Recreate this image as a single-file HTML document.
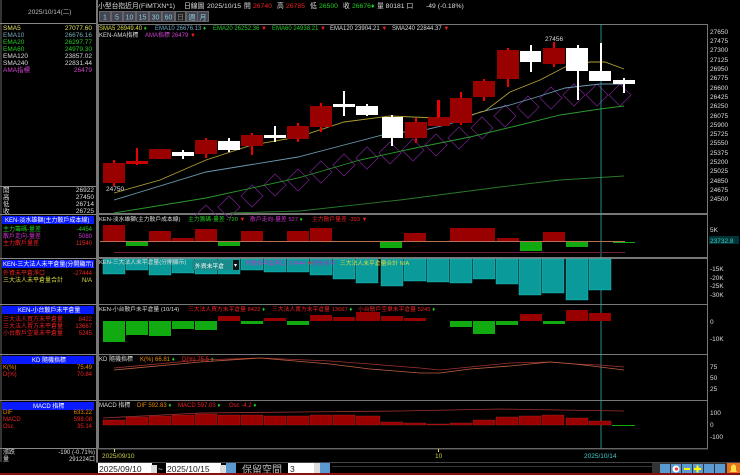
<!DOCTYPE html>
<html><head><meta charset="utf-8"><style>
body{margin:0;background:#000;width:740px;height:475px;overflow:hidden}
svg{display:block}
text{font-family:"Liberation Sans","Noto Sans CJK TC",sans-serif}
.m{font-family:"Liberation Mono","Noto Sans CJK TC",monospace}
</style></head><body>
<svg width="740" height="475" viewBox="0 0 740 475" xmlns="http://www.w3.org/2000/svg">
<rect width="740" height="475" fill="#000"/>
<rect x="96" y="0" width="2" height="462" fill="#777"/>
<rect x="0" y="0" width="2" height="475" fill="#333"/>
<line x1="0" y1="23.5" x2="96" y2="23.5" stroke="#888"/>
<line x1="0" y1="186.5" x2="96" y2="186.5" stroke="#888"/>
<line x1="0" y1="214.5" x2="96" y2="214.5" stroke="#888"/>
<line x1="0" y1="258.5" x2="96" y2="258.5" stroke="#888"/>
<line x1="0" y1="304.5" x2="96" y2="304.5" stroke="#888"/>
<line x1="0" y1="354.5" x2="96" y2="354.5" stroke="#888"/>
<line x1="0" y1="400.5" x2="96" y2="400.5" stroke="#888"/>
<line x1="0" y1="448.5" x2="96" y2="448.5" stroke="#888"/>
<g class="m" font-size="6.5">
<text x="28" y="14" fill="#bbb">2025/10/14(二)</text>
<text x="3" y="30" fill="#e0e060">SMA5</text><text x="92" y="30" fill="#e0e060" text-anchor="end">27077.60</text>
<text x="3" y="37" fill="#7ab">EMA10</text><text x="92" y="37" fill="#7ab" text-anchor="end">26676.16</text>
<text x="3" y="44" fill="#2c2">EMA20</text><text x="92" y="44" fill="#2c2" text-anchor="end">26297.77</text>
<text x="3" y="51" fill="#2c2">EMA60</text><text x="92" y="51" fill="#2c2" text-anchor="end">24979.30</text>
<text x="3" y="58" fill="#ddd">EMA120</text><text x="92" y="58" fill="#ddd" text-anchor="end">23857.02</text>
<text x="3" y="65" fill="#ddd">SMA240</text><text x="92" y="65" fill="#ddd" text-anchor="end">22831.44</text>
<text x="3" y="72" fill="#c4c">AMA指標</text><text x="92" y="72" fill="#c4c" text-anchor="end">26479</text>
<text x="3" y="192" fill="#ddd">開</text><text x="94" y="192" fill="#ddd" text-anchor="end">26922</text>
<text x="3" y="199" fill="#ddd">高</text><text x="94" y="199" fill="#ddd" text-anchor="end">27450</text>
<text x="3" y="206" fill="#ddd">低</text><text x="94" y="206" fill="#ddd" text-anchor="end">26714</text>
<text x="3" y="213" fill="#ddd">收</text><text x="94" y="213" fill="#ddd" text-anchor="end">26725</text>
</g>
<rect x="2" y="216" width="92" height="8" fill="#0a1aff"/>
<rect x="2" y="260" width="92" height="8" fill="#0a1aff"/>
<rect x="2" y="306" width="92" height="8" fill="#0a1aff"/>
<rect x="2" y="356" width="92" height="8" fill="#0a1aff"/>
<rect x="2" y="402" width="92" height="8" fill="#0a1aff"/>
<g class="m" font-size="6">
<text x="5" y="222" fill="#fff">KEN-淡水雄獅(主力散戶成本線)</text>
<text x="3" y="231" fill="#2c2">主力籌碼-量差</text><text x="92" y="231" fill="#2c2" text-anchor="end">-4454</text>
<text x="3" y="238" fill="#c3c">散戶走向-量差</text><text x="92" y="238" fill="#c3c" text-anchor="end">5080</text>
<text x="3" y="245" fill="#e22">主力散戶量差</text><text x="92" y="245" fill="#e22" text-anchor="end">11540</text>
<text x="3" y="266" fill="#fff">KEN-三大法人未平倉量(分開顯示)</text>
<text x="3" y="275" fill="#e22">外資未平倉淨口</text><text x="92" y="275" fill="#e22" text-anchor="end">-27444</text>
<text x="3" y="282" fill="#dd4">三大法人未平倉量合計</text><text x="92" y="282" fill="#dd4" text-anchor="end">N/A</text>
<text x="18" y="312" fill="#fff">KEN-小台散戶未平倉量</text>
<text x="3" y="321" fill="#e22">三大法人買方未平倉量</text><text x="92" y="321" fill="#e22" text-anchor="end">8422</text>
<text x="3" y="328" fill="#e22">三大法人賣方未平倉量</text><text x="92" y="328" fill="#e22" text-anchor="end">13667</text>
<text x="3" y="335" fill="#e22">小台散戶空單未平倉量</text><text x="92" y="335" fill="#e22" text-anchor="end">5245</text>
<text x="32" y="362" fill="#fff">KD 隨機指標</text>
<text x="3" y="369" fill="#e80">K(%)</text><text x="92" y="369" fill="#e80" text-anchor="end">75.49</text>
<text x="3" y="376" fill="#e22">D(%)</text><text x="92" y="376" fill="#e22" text-anchor="end">70.84</text>
<text x="33" y="408" fill="#fff">MACD 指標</text>
<text x="3" y="414" fill="#e80">DIF</text><text x="92" y="414" fill="#e80" text-anchor="end">633.22</text>
<text x="3" y="421" fill="#e22">MACD</text><text x="92" y="421" fill="#e22" text-anchor="end">598.08</text>
<text x="3" y="428" fill="#e22">Osc</text><text x="92" y="428" fill="#e22" text-anchor="end">35.14</text>
<text x="3" y="454" fill="#ddd">漲跌</text><text x="95" y="454" fill="#ddd" text-anchor="end">-190 (-0.71%)</text>
<text x="3" y="461" fill="#ddd">量</text><text x="95" y="461" fill="#ddd" text-anchor="end">291224口</text>
</g>

<g font-size="6.8">
<text x="98" y="8" fill="#ddd">小型台指近月(FIMTXN*1)</text>
<text x="184" y="8" fill="#ddd">日線圖</text>
<text x="207" y="8" fill="#ddd">2025/10/15</text>
<text x="244" y="8" fill="#ddd">開</text><text x="253" y="8" fill="#e22">26740</text>
<text x="277" y="8" fill="#ddd">高</text><text x="286" y="8" fill="#e22">26785</text>
<text x="310" y="8" fill="#ddd">低</text><text x="319" y="8" fill="#2c2">26500</text>
<text x="343" y="8" fill="#ddd">收</text><text x="352" y="8" fill="#2c2">26676</text>
<text x="371" y="8" fill="#2c2">♦</text>
<text x="377" y="8" fill="#ddd">量 80181 口</text>
<text x="426" y="8" fill="#ddd">-49 (-0.18%)</text>
</g>
<g font-size="7" text-anchor="middle">
<rect x="99" y="11" width="110" height="11" fill="#3a3a3a"/>
<rect x="99.5" y="11.5" width="11" height="10" fill="#445" stroke="#666"/><text x="105" y="19.5" fill="#8cc">1</text>
<rect x="111.5" y="11.5" width="11" height="10" fill="#445" stroke="#666"/><text x="117" y="19.5" fill="#8cc">5</text>
<rect x="123.5" y="11.5" width="12" height="10" fill="#445" stroke="#666"/><text x="129.5" y="19.5" fill="#8cc">10</text>
<rect x="136.5" y="11.5" width="12" height="10" fill="#445" stroke="#666"/><text x="142.5" y="19.5" fill="#8cc">15</text>
<rect x="149.5" y="11.5" width="12" height="10" fill="#445" stroke="#666"/><text x="155.5" y="19.5" fill="#8cc">30</text>
<rect x="162.5" y="11.5" width="12" height="10" fill="#445" stroke="#666"/><text x="168.5" y="19.5" fill="#8cc">60</text>
<rect x="175.5" y="11.5" width="10" height="10" fill="#222" stroke="#666"/><text x="180.5" y="19.5" fill="#888">日</text>
<rect x="186.5" y="11.5" width="11" height="10" fill="#445" stroke="#666"/><text x="192" y="19.5" fill="#8cc">週</text>
<rect x="197.5" y="11.5" width="11" height="10" fill="#445" stroke="#666"/><text x="203" y="19.5" fill="#8cc">月</text>
</g>

<g fill="none" stroke="#777">
<rect x="98.5" y="24.5" width="609" height="189"/>
<rect x="98.5" y="214.5" width="609" height="43"/>
<rect x="98.5" y="258.5" width="609" height="46"/>
<rect x="98.5" y="304.5" width="609" height="50"/>
<rect x="98.5" y="354.5" width="609" height="46"/>
<rect x="98.5" y="400.5" width="609" height="48"/>
</g>
<line x1="98" y1="449" x2="708" y2="449" stroke="#555"/>

<g font-size="6">
<text x="99" y="30" fill="#dd4">SMA5 26949.40 <tspan fill="#2c2">♦</tspan></text>
<text x="155" y="30" fill="#6ac">EMA10 26676.13 <tspan fill="#2c2">♦</tspan></text>
<text x="213" y="30" fill="#2c2">EMA20 26252.36 <tspan fill="#e22">▼</tspan></text>
<text x="272" y="30" fill="#2c2">EMA60 24938.21 <tspan fill="#e22">▼</tspan></text>
<text x="330" y="30" fill="#ddd">EMA120 23904.21 <tspan fill="#e22">▼</tspan></text>
<text x="392" y="30" fill="#ddd">SMA240 22844.37 <tspan fill="#e22">▼</tspan></text>
<text x="99" y="37" fill="#ddd">KEN-AMA指標</text>
<text x="145" y="37" fill="#c4c">AMA指標 26479 <tspan fill="#e22">▼</tspan></text>
</g>

<g font-size="6.5" fill="#ddd">
<text x="710" y="34">27650</text><text x="710" y="43">27475</text><text x="710" y="52">27300</text><text x="710" y="62">27125</text>
<text x="710" y="71">26950</text><text x="710" y="80">26775</text><text x="710" y="90">26600</text><text x="710" y="99">26425</text>
<text x="710" y="108">26250</text><text x="710" y="118">26075</text><text x="710" y="127">25900</text><text x="710" y="136">25725</text>
<text x="710" y="145">25550</text><text x="710" y="155">25375</text><text x="710" y="164">25200</text><text x="710" y="173">25025</text>
<text x="710" y="183">24850</text><text x="710" y="192">24675</text><text x="710" y="201">24500</text>
<text x="710" y="232">5K</text>
<rect x="709" y="236" width="30" height="8" fill="#033"/><text x="710" y="243" fill="#4cc">23732.8</text>
<text x="710" y="271">-15K</text><text x="710" y="280">-20K</text><text x="710" y="288">-25K</text><text x="710" y="297">-30K</text>
<text x="710" y="324">0</text><text x="710" y="341">-10K</text>
<text x="710" y="369">75</text><text x="710" y="380">50</text><text x="710" y="391">25</text>
<text x="710" y="415">100</text><text x="710" y="427">0</text><text x="710" y="439">-100</text>
</g>

<g fill="none" stroke="#6a2080" stroke-width="0.8">
<path d="M195 216l11-11 11 11M218 207l11-11 11 11 -11 11z M241 196l11-11 11 11-11 11z M264 185l11-11 11 11-11 11z M287 180l11-11 11 11-11 11z M310 172l11-11 11 11-11 11z M333 165l11-11 11 11-11 11z M356 158l11-11 11 11-11 11z M379 153l11-11 11 11-11 11z M402 150l11-11 11 11-11 11z M425 145l11-11 11 11-11 11z M448 138l11-11 11 11-11 11z M471 128l11-11 11 11-11 11z M494 116l11-11 11 11-11 11z M517 107l11-11 11 11-11 11z M540 98l11-11 11 11-11 11z M563 95l11-11 11 11-11 11z M586 95l11-11 11 11-11 11z M609 95l11-11 11 11-11 11z"/>
</g>
<g fill="none" stroke-width="0.9">
<polyline stroke="#2a7a2a" points="230,213 300,211 400,200 500,187 560,180 624,176"/>
<polyline stroke="#2a9a2a" points="114,213 206,198 298,178 360,160 420,147 470,137 520,125 560,115 600,109 624,106"/>
<polyline stroke="#6a9ab0" points="114,200 206,172 298,157 344,145 390,133 420,131 450,124 480,112 510,105 540,96 565,88 600,84 624,84"/>
<polyline stroke="#b0a030" points="114,193 160,180 206,160 252,145 298,137 344,122 390,116 436,118 460,118 485,111 510,92 540,80 565,67 590,62 605,62 624,69"/>
</g>
<line x1="601" y1="24" x2="601" y2="448" stroke="#3aa" stroke-width="0.8"/>

<g>
<rect x="113" y="160" width="2" height="26" fill="#e00"/><rect x="103" y="163" width="22" height="20" fill="#900"/>
<rect x="136" y="148" width="2" height="17" fill="#e00"/><rect x="126" y="161" width="22" height="3" fill="#c00"/>
<rect x="149" y="149" width="22" height="10" fill="#900"/>
<rect x="182" y="150" width="2" height="9" fill="#fff"/><rect x="172" y="152" width="22" height="4" fill="#fff"/>
<rect x="205" y="138" width="2" height="20" fill="#e00"/><rect x="195" y="140" width="22" height="14" fill="#900"/>
<rect x="228" y="138" width="2" height="14" fill="#fff"/><rect x="218" y="141" width="22" height="9" fill="#fff"/>
<rect x="251" y="133" width="2" height="22" fill="#e00"/><rect x="241" y="135" width="22" height="11" fill="#900"/>
<rect x="274" y="126" width="2" height="16" fill="#fff"/><rect x="264" y="135" width="22" height="3" fill="#fff"/>
<rect x="297" y="123" width="2" height="19" fill="#e00"/><rect x="287" y="126" width="22" height="13" fill="#900"/>
<rect x="320" y="103" width="2" height="29" fill="#e00"/><rect x="310" y="106" width="22" height="21" fill="#900"/>
<rect x="343" y="91" width="2" height="25" fill="#fff"/><rect x="333" y="104" width="22" height="3" fill="#fff"/>
<rect x="366" y="104" width="2" height="12" fill="#fff"/><rect x="356" y="106" width="22" height="9" fill="#fff"/>
<rect x="391" y="115" width="2" height="31" fill="#fff"/><rect x="382" y="117" width="21" height="21" fill="#fff"/>
<rect x="415" y="118" width="2" height="25" fill="#e00"/><rect x="405" y="122" width="22" height="16" fill="#900"/>
<rect x="437" y="100" width="3" height="25" fill="#e00"/><rect x="428" y="117" width="22" height="9" fill="#900"/>
<rect x="460" y="92" width="2" height="33" fill="#e00"/><rect x="450" y="98" width="22" height="25" fill="#900"/>
<rect x="483" y="79" width="2" height="22" fill="#e00"/><rect x="473" y="81" width="22" height="16" fill="#900"/>
<rect x="507" y="48" width="2" height="39" fill="#e00"/><rect x="497" y="50" width="22" height="29" fill="#900"/>
<rect x="530" y="45" width="2" height="27" fill="#fff"/><rect x="520" y="51" width="21" height="11" fill="#fff"/>
<rect x="553" y="42" width="2" height="25" fill="#e00"/><rect x="543" y="48" width="22" height="16" fill="#900"/>
<rect x="577" y="45" width="2" height="55" fill="#fff"/><rect x="566" y="48" width="22" height="23" fill="#fff"/>
<rect x="600" y="43" width="2" height="38" fill="#fff"/><rect x="589" y="71" width="22" height="10" fill="#fff"/>
<rect x="623" y="78" width="2" height="15" fill="#fff"/><rect x="613" y="80" width="22" height="4" fill="#fff"/>
</g>
<text x="106" y="191" font-size="6.5" fill="#ddd">24750</text>
<text x="545" y="41" font-size="6.5" fill="#ddd">27456</text>

<g font-size="5.8">
<text x="99" y="221" fill="#ddd">KEN-淡水雄獅(主力散戶成本線)</text>
<text x="188" y="221" fill="#2c2">主力籌碼-量差 -720 <tspan fill="#e22">▼</tspan></text>
<text x="250" y="221" fill="#c3c">散戶走向-量差 527 <tspan fill="#2c2">♦</tspan></text>
<text x="312" y="221" fill="#e22">主力散戶量差 -393 <tspan fill="#e22">▼</tspan></text>
</g>
<g fill="#900">
<rect x="103" y="225" width="22" height="17"/><rect x="149" y="231" width="22" height="11"/><rect x="172" y="238" width="22" height="4"/>
<rect x="195" y="229" width="22" height="13"/><rect x="241" y="231" width="22" height="11"/><rect x="287" y="231" width="22" height="11"/>
<rect x="310" y="228" width="22" height="14"/><rect x="404" y="233" width="22" height="9"/><rect x="450" y="228" width="45" height="14"/>
<rect x="543" y="232" width="22" height="10"/><rect x="497" y="238" width="22" height="4"/>
</g>
<line x1="100" y1="241.5" x2="625" y2="241.5" stroke="#b87050"/>
<g fill="#1a1">
<rect x="126" y="242" width="22" height="4"/><rect x="218" y="242" width="22" height="4"/><rect x="380" y="242" width="22" height="6"/>
<rect x="520" y="242" width="22" height="9"/><rect x="566" y="242" width="22" height="5"/><rect x="613" y="242" width="22" height="1"/>
</g>
<line x1="114" y1="252.5" x2="625" y2="252.5" stroke="#702040"/>

<g fill="#0a9a9a" stroke="#2cc" stroke-width="0.4">
<rect x="103" y="259" width="22" height="15"/><rect x="126" y="259" width="22" height="11"/><rect x="149" y="259" width="22" height="16"/>
<rect x="172" y="259" width="22" height="14"/><rect x="195" y="259" width="22" height="15"/><rect x="218" y="259" width="22" height="15"/>
<rect x="241" y="259" width="22" height="11"/><rect x="264" y="259" width="22" height="13"/><rect x="287" y="259" width="22" height="13"/>
<rect x="310" y="259" width="22" height="16"/><rect x="333" y="259" width="22" height="20"/><rect x="356" y="259" width="22" height="24"/>
<rect x="381" y="259" width="22" height="27"/><rect x="404" y="259" width="22" height="22"/><rect x="427" y="259" width="22" height="23"/>
<rect x="450" y="259" width="22" height="24"/><rect x="473" y="259" width="22" height="20"/><rect x="496" y="259" width="22" height="25"/>
<rect x="519" y="259" width="22" height="36"/><rect x="542" y="259" width="22" height="34"/><rect x="566" y="259" width="22" height="41"/>
<rect x="589" y="259" width="22" height="31"/>
</g>
<g font-size="5.8">
<text x="99" y="264" fill="#ddd">KEN-三大法人未平倉量(分開顯示)</text>
<rect x="192" y="260" width="40" height="10" fill="#1a8a8a"/><text x="195" y="268" fill="#fff">外資未平倉</text>
<rect x="233" y="260" width="6" height="10" fill="#111"/><text x="234" y="267" fill="#fff">▾</text>
<text x="245" y="265" fill="#c3c">外資未平倉淨口 -27444 <tspan fill="#e22">▼</tspan></text>
<text x="312" y="265" fill="#aa30c0">投信未平</text>
<text x="340" y="265" fill="#dd4">三大法人未平倉量合計 N/A</text>
</g>

<g font-size="5.8">
<text x="99" y="311" fill="#ddd">KEN-小台散戶未平倉量 (10/14)</text>
<text x="188" y="311" fill="#e22">三大法人買方未平倉量 8422 <tspan fill="#2c2">♦</tspan></text>
<text x="272" y="311" fill="#e22">三大法人賣方未平倉量 13667 <tspan fill="#2c2">♦</tspan></text>
<text x="358" y="311" fill="#e22">小台散戶空單未平倉量 5245 <tspan fill="#2c2">♦</tspan></text>
</g>
<g fill="#1a1">
<rect x="103" y="321" width="22" height="21"/><rect x="126" y="321" width="22" height="14"/><rect x="149" y="321" width="22" height="15"/>
<rect x="172" y="321" width="22" height="8"/><rect x="195" y="321" width="22" height="9"/><rect x="241" y="321" width="22" height="3"/>
<rect x="287" y="321" width="22" height="4"/><rect x="450" y="321" width="22" height="6"/><rect x="473" y="321" width="22" height="13"/>
<rect x="496" y="321" width="22" height="4"/><rect x="543" y="321" width="22" height="3"/>
</g>
<g fill="#900">
<rect x="218" y="316" width="22" height="5"/><rect x="264" y="318" width="22" height="3"/><rect x="310" y="315" width="22" height="6"/>
<rect x="333" y="317" width="22" height="4"/><rect x="356" y="312" width="24" height="9"/><rect x="381" y="316" width="22" height="5"/>
<rect x="404" y="318" width="22" height="3"/><rect x="520" y="314" width="22" height="7"/><rect x="566" y="310" width="22" height="11"/><rect x="589" y="313" width="22" height="8"/>
</g>

<g font-size="6">
<text x="99" y="361" fill="#ddd">KD 隨機指標</text>
<text x="140" y="361" fill="#e80">K(%) 66.81 <tspan fill="#2c2">♦</tspan></text>
<text x="182" y="361" fill="#e22">D(%) 75.5 <tspan fill="#2c2">♦</tspan></text>
</g>
<g fill="none" stroke-width="0.8">
<polyline stroke="#a03030" points="114,368 200,360 260,358 330,361 370,364 420,368 440,370 470,367 510,363 550,362 575,364 600,365 624,367"/>
<polyline stroke="#c06040" points="114,370 200,362 260,358 330,364 370,369 420,373 440,373 470,369 510,366 550,362 575,364 600,367 624,370"/>
</g>

<g font-size="6">
<text x="99" y="407" fill="#ddd">MACD 指標</text>
<text x="137" y="407" fill="#e80">DIF 592.83 <tspan fill="#2c2">♦</tspan></text>
<text x="178" y="407" fill="#e22">MACD 597.03 <tspan fill="#2c2">♦</tspan></text>
<text x="229" y="407" fill="#e22">Osc -4.2 <tspan fill="#2c2">♦</tspan></text>
</g>
<g fill="#900" stroke="#c33" stroke-width="0.3">
<rect x="103" y="420" width="22" height="5"/><rect x="126" y="417" width="22" height="8"/><rect x="149" y="416" width="22" height="9"/>
<rect x="172" y="415" width="22" height="10"/><rect x="195" y="414" width="22" height="11"/><rect x="218" y="415" width="22" height="10"/>
<rect x="241" y="415" width="22" height="10"/><rect x="264" y="416" width="22" height="9"/><rect x="287" y="416" width="22" height="9"/>
<rect x="310" y="415" width="22" height="10"/><rect x="333" y="415" width="22" height="10"/><rect x="356" y="416" width="24" height="9"/>
<rect x="381" y="422" width="22" height="3"/><rect x="404" y="423" width="22" height="2"/><rect x="427" y="424" width="22" height="1"/>
<rect x="450" y="423" width="22" height="2"/><rect x="473" y="420" width="22" height="5"/><rect x="496" y="417" width="22" height="8"/>
<rect x="519" y="416" width="22" height="9"/><rect x="542" y="415" width="22" height="10"/><rect x="566" y="418" width="22" height="7"/><rect x="589" y="421" width="22" height="4"/>
</g>
<line x1="612" y1="425.5" x2="635" y2="425.5" stroke="#1a1"/>
<polyline fill="none" stroke="#a03030" stroke-width="0.8" points="103,418 200,413 300,412 400,411 500,409 560,410 624,411"/>

<line x1="114.5" y1="449" x2="114.5" y2="452" stroke="#dd4"/>
<text x="102" y="458" font-size="6.5" fill="#cc4">2025/09/10</text>
<line x1="438.5" y1="449" x2="438.5" y2="452" stroke="#dd4"/>
<text x="435" y="458" font-size="6.5" fill="#cc4">10</text>
<text x="584" y="458" font-size="6.5" fill="#4cc">2025/10/14</text>

<rect x="0" y="462" width="740" height="13" fill="#000"/>
<rect x="96" y="462" width="644" height="1" fill="#444"/>
<rect x="98" y="463" width="54" height="11" fill="#fff"/><text x="99" y="472" font-size="8.5" fill="#222">2025/09/10</text>
<rect x="151" y="465" width="6" height="8" fill="#ddd"/>
<text x="158" y="472" font-size="8" fill="#ddd">~</text>
<rect x="166" y="463" width="55" height="11" fill="#fff"/><text x="167" y="472" font-size="8.5" fill="#222">2025/10/15</text>
<rect x="220" y="465" width="6" height="8" fill="#ddd"/>
<rect x="226" y="463" width="10" height="11" fill="#5a9ad0"/>
<text x="242" y="473" font-size="10" fill="#bbb">保留空間</text>
<rect x="288" y="463" width="26" height="11" fill="#fff"/><text x="290" y="472" font-size="8.5" fill="#222">3</text>
<rect x="314" y="463" width="6" height="11" fill="#ddd"/>
<rect x="320" y="463" width="10" height="11" fill="#5a9ad0"/>
<rect x="332" y="466" width="354" height="1" fill="#333"/>
<rect x="652" y="463" width="88" height="11" fill="#333"/>
<g fill="#5a9ad0"><rect x="660" y="464" width="10" height="10"/><rect x="671" y="464" width="10" height="10"/><rect x="682" y="464" width="10" height="10"/><rect x="693" y="464" width="10" height="10"/><rect x="704" y="464" width="10" height="10"/><rect x="715" y="464" width="10" height="10"/></g>
<circle cx="676" cy="469" r="3.5" fill="#fff"/><circle cx="676.5" cy="469" r="1.6" fill="#e44"/>
<rect x="684" y="468" width="6" height="2" fill="#ff0"/><rect x="694" y="468" width="7" height="2" fill="#ff0"/><rect x="696.5" y="465.5" width="2" height="7" fill="#ff0"/>
<rect x="727" y="463" width="13" height="11" fill="#e67020"/><path d="M730 472h7l-1-2v-3a2.5 2.5 0 0 0-5 0v3z" fill="#fd4"/>
<rect x="0" y="473" width="740" height="2" fill="#8a1010"/>
</svg>
</body></html>
